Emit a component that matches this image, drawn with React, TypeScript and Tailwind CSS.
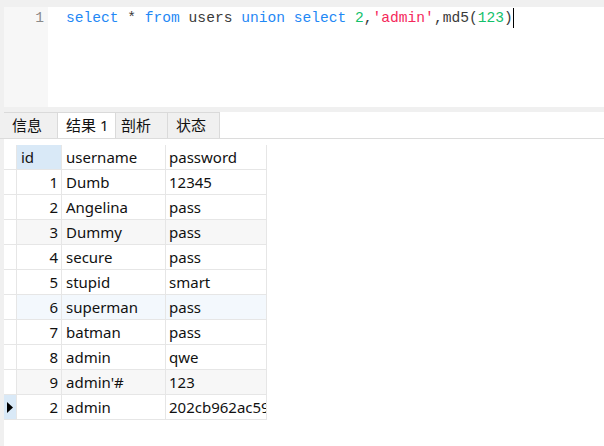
import React from "react";

const rows = [
  { id: 1, username: "Dumb", password: "12345", bg: "bg-white" },
  { id: 2, username: "Angelina", password: "pass", bg: "bg-white" },
  { id: 3, username: "Dummy", password: "pass", bg: "bg-[#f7f7f7]" },
  { id: 4, username: "secure", password: "pass", bg: "bg-white" },
  { id: 5, username: "stupid", password: "smart", bg: "bg-white" },
  { id: 6, username: "superman", password: "pass", bg: "bg-[#f3f8fd]" },
  { id: 7, username: "batman", password: "pass", bg: "bg-white" },
  { id: 8, username: "admin", password: "qwe", bg: "bg-white" },
  { id: 9, username: "admin'#", password: "123", bg: "bg-[#f7f7f7]" },
  { id: 2, username: "admin", password: "202cb962ac59075b964b07152d234b70", bg: "bg-white", current: true },
];

const tabs = [
  { label: "信息", w: "w-[54px]", pl: "pl-[8px]" },
  { label: "结果 1", w: "w-[58px]", pl: "pl-[8px]", active: true },
  { label: "剖析", w: "w-[52px]", pl: "pl-[5px]" },
  { label: "状态", w: "w-[52px]", pl: "pl-[8px]" },
];

const cell = "h-[25px] flex items-center border-r border-b border-[#e6e6e6] overflow-hidden whitespace-nowrap";

export default function App() {
  return (
    <div
      className="w-[604px] h-[446px] bg-[#f0f0f0] pl-[4px] pt-[7px] flex flex-col overflow-hidden text-[#111]"
      style={{ fontFamily: '"Noto Sans", "Noto Sans CJK SC", sans-serif' }}
    >
      {/* editor */}
      <div className="h-[100px] flex shrink-0">
        <div
          className="w-[44px] bg-[#f7f7f7] pr-[4px] pt-[1px] text-right text-[14.6px] leading-[20px] text-[#8a8a8a]"
          style={{ fontFamily: '"Liberation Mono", monospace' }}
        >
          1
        </div>
        <div
          className="flex-1 bg-white pl-[18px] pt-[1px] text-[14.6px] leading-[20px] text-[#3a3a3a] whitespace-pre flex items-start"
          style={{ fontFamily: '"Liberation Mono", monospace' }}
        >
          <span className="text-[#1f88f5]">select</span>
          <span> * </span>
          <span className="text-[#1f88f5]">from</span>
          <span> users </span>
          <span className="text-[#1f88f5]">union</span>
          <span> </span>
          <span className="text-[#1f88f5]">select</span>
          <span> </span>
          <span className="text-[#13c16a]">2</span>
          <span>,</span>
          <span className="text-[#f5285a]">'admin'</span>
          <span>,md5(</span>
          <span className="text-[#13c16a]">123</span>
          <span>)</span>
          <span className="w-px h-[20px] bg-black" />
        </div>
      </div>

      {/* tabs */}
      <div className="mt-[5px] h-[27px] shrink-0 flex bg-white border-b border-[#dcdcdc] -ml-[4px] pl-[4px] bg-clip-content">
        {tabs.map((t) => (
          <div
            key={t.label}
            className={`${t.w} ${t.pl} h-[26px] flex items-center text-[15px] border-t border-r border-[#dadada] ${
              t.active ? "bg-white" : "bg-[#f0f0f0]"
            }`}
          >
            {t.label}
          </div>
        ))}
        <div className="flex-1 bg-white" />
      </div>

      {/* grid */}
      <div className="flex-1 bg-white pt-[6px] text-[15px]">
        <div className="flex w-fit">
          <div className={`${cell} w-[13px]`} />
          <div className={`${cell} w-[45px] bg-[#d9e9f7] pl-[4px]`}>id</div>
          <div className={`${cell} w-[104px] pl-[4px]`}>username</div>
          <div className={`${cell} w-[101px] pl-[3px]`}>password</div>
        </div>
        {rows.map((r, i) => (
          <div key={i} className={`flex w-fit ${r.bg}`}>
            <div className={`${cell} w-[13px] justify-center ${r.current ? "bg-[#d9e9f7]" : "bg-white"}`}>
              {r.current && (
                <svg width="6" height="11" viewBox="0 0 6 11">
                  <path d="M0 0 L6 5.5 L0 11 Z" fill="#000" />
                </svg>
              )}
            </div>
            <div className={`${cell} w-[45px] justify-end pr-[3px]`}>{r.id}</div>
            <div className={`${cell} w-[104px] pl-[4px]`}>{r.username}</div>
            <div className={`${cell} w-[101px] pl-[3px]`}>{r.password}</div>
          </div>
        ))}
      </div>
    </div>
  );
}
